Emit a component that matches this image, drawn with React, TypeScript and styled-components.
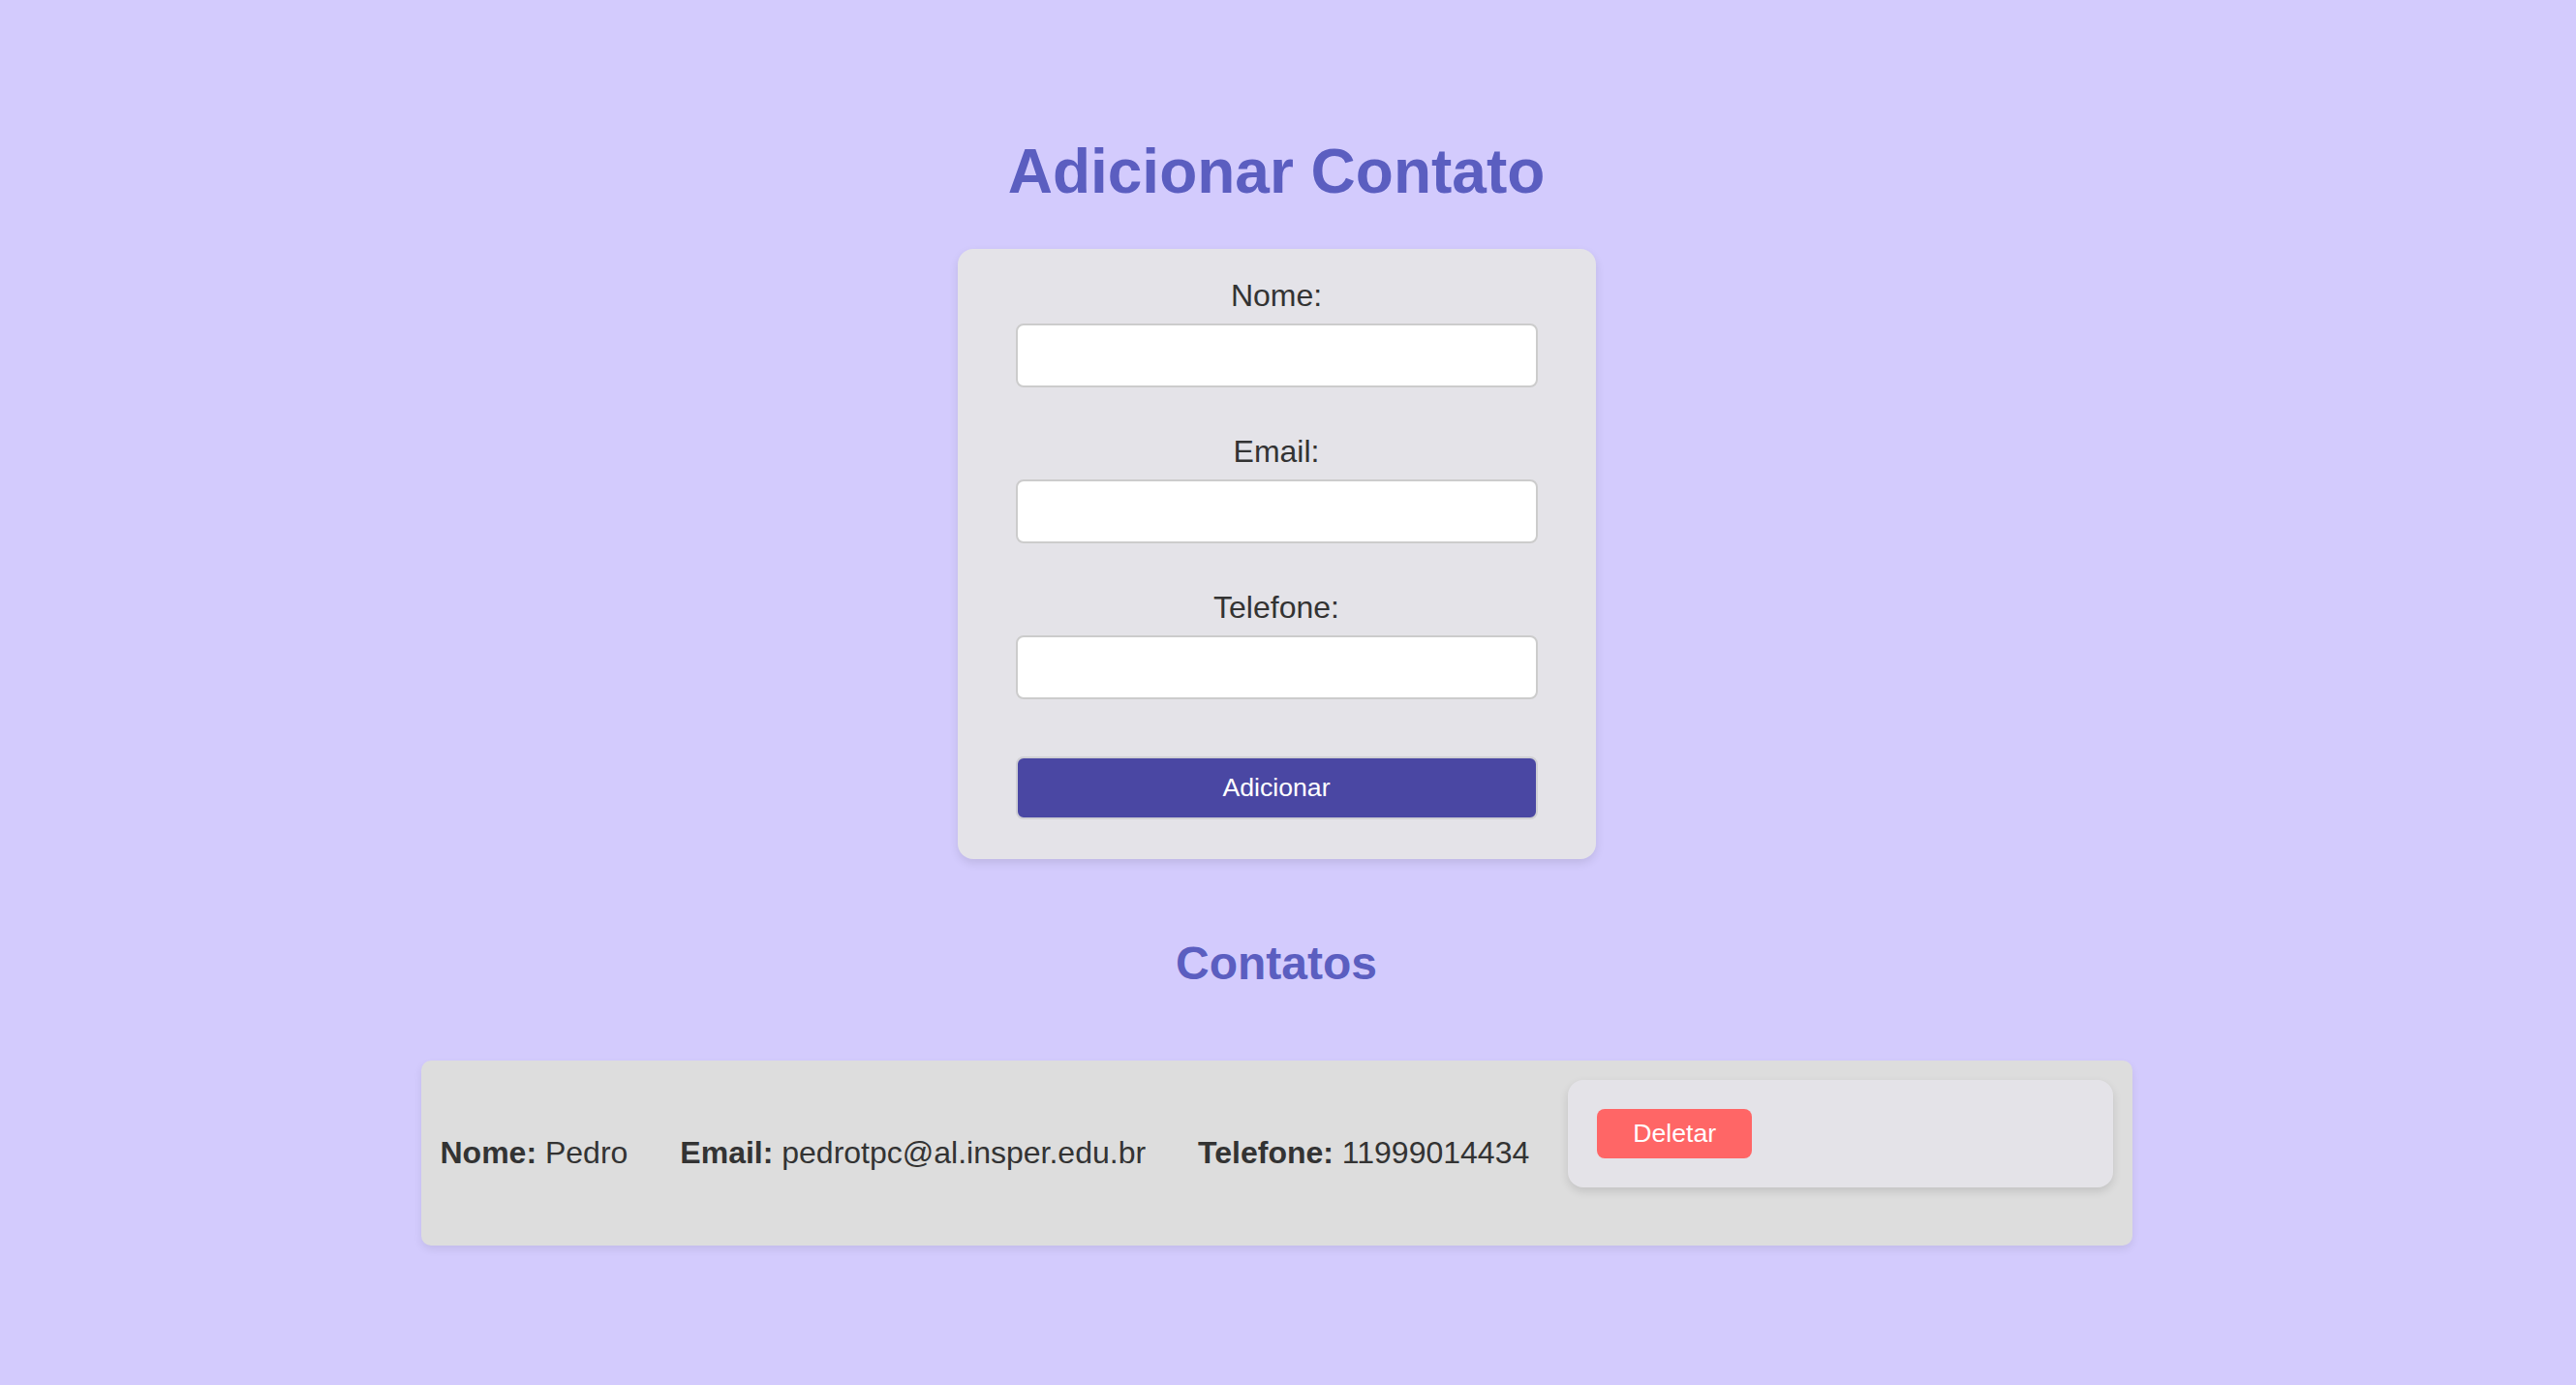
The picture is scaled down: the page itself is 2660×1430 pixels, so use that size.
import React from "react";
import styled, { createGlobalStyle } from "styled-components";

const GlobalStyle = createGlobalStyle`
  html, body {
    margin: 0;
    padding: 0;
    background: #d3cbfd;
  }
  body {
    font-family: "Liberation Sans", Arial, Helvetica, sans-serif;
    color: #333333;
  }
  * { box-sizing: border-box; }
`;

const Page = styled.div`
  display: flex;
  flex-direction: column;
  align-items: center;
  padding: 140px 24px 100px 0;
  min-height: 1430px;
`;

const Title = styled.h1`
  margin: 0 0 43px;
  font-size: 64px;
  font-weight: 700;
  line-height: normal;
  color: #5b5ec0;
`;

const FormCard = styled.form`
  width: 659px;
  padding: 30px 60px 41px;
  background: #e4e3e8;
  border-radius: 16px;
  box-shadow: 0 4px 10px rgba(0, 0, 0, 0.1);
  display: flex;
  flex-direction: column;
`;

const Field = styled.div<{ $gap: number }>`
  display: flex;
  flex-direction: column;
  margin-bottom: ${(p) => p.$gap}px;
`;

const Label = styled.label`
  display: block;
  text-align: center;
  font-size: 32px;
  line-height: normal;
  color: #333333;
  margin-bottom: 10px;
`;

const Input = styled.input`
  width: 100%;
  height: 66px;
  border: 2px solid #cccccc;
  border-radius: 8px;
  background: #ffffff;
  font-size: 28px;
  padding: 0 16px;
  font-family: inherit;
`;

const SubmitButton = styled.button`
  width: 100%;
  height: 65px;
  border: 2px solid #cfcfd4;
  border-radius: 8px;
  background: #4a47a3;
  color: #ffffff;
  font-family: "Liberation Sans", Arial, sans-serif;
  font-size: 26.67px;
  cursor: pointer;
`;

const SubTitle = styled.h2`
  margin: 80px 0 73px;
  font-size: 48px;
  font-weight: 700;
  line-height: normal;
  color: #5b5ec0;
`;

const List = styled.ul`
  list-style: none;
  margin: 0;
  padding: 0;
  width: 1767px;
`;

const ContactItem = styled.li`
  display: flex;
  align-items: center;
  padding: 20px;
  background: #dddddd;
  border-radius: 10px;
  box-shadow: 0 4px 8px rgba(0, 0, 0, 0.08);
`;

const Info = styled.span<{ $space: number }>`
  font-size: 32px;
  line-height: normal;
  color: #333333;
  white-space: nowrap;
  margin-right: ${(p) => p.$space}px;
  strong { font-weight: 700; }
`;

const Actions = styled.div`
  flex: 1;
  display: flex;
  align-items: flex-start;
  padding: 30px;
  margin-bottom: 40px;
  background: #e4e3e8;
  border-radius: 16px;
  box-shadow: 0 4px 10px rgba(0, 0, 0, 0.12);
`;

const DeleteButton = styled.button`
  height: 51px;
  padding: 0 37px;
  border: none;
  border-radius: 8px;
  background: #ff6666;
  color: #ffffff;
  font-family: "Liberation Sans", Arial, sans-serif;
  font-size: 26.67px;
  cursor: pointer;
`;

const contacts = [
  { nome: "Pedro", email: "pedrotpc@al.insper.edu.br", telefone: "11999014434" },
];

export default function App() {
  return (
    <>
      <GlobalStyle />
      <Page>
        <Title>Adicionar Contato</Title>
        <FormCard onSubmit={(e) => e.preventDefault()}>
          <Field $gap={48}>
            <Label htmlFor="nome">Nome:</Label>
            <Input id="nome" type="text" />
          </Field>
          <Field $gap={48}>
            <Label htmlFor="email">Email:</Label>
            <Input id="email" type="email" />
          </Field>
          <Field $gap={59}>
            <Label htmlFor="telefone">Telefone:</Label>
            <Input id="telefone" type="tel" />
          </Field>
          <SubmitButton type="submit">Adicionar</SubmitButton>
        </FormCard>
        <SubTitle>Contatos</SubTitle>
        <List>
          {contacts.map((c) => (
            <ContactItem key={c.email}>
              <Info $space={54}>
                <strong>Nome:</strong> {c.nome}
              </Info>
              <Info $space={54}>
                <strong>Email:</strong> {c.email}
              </Info>
              <Info $space={40}>
                <strong>Telefone:</strong> {c.telefone}
              </Info>
              <Actions>
                <DeleteButton type="button">Deletar</DeleteButton>
              </Actions>
            </ContactItem>
          ))}
        </List>
      </Page>
    </>
  );
}
